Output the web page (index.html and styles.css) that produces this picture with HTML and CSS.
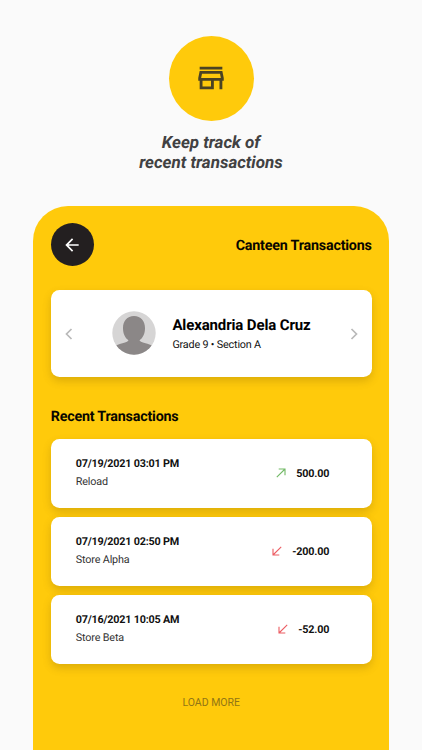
FILE: index.html
```html
<!DOCTYPE html>
<html lang="en">
<head>
<meta charset="utf-8">
<title>Canteen Transactions</title>
<link rel="stylesheet" href="styles.css">
</head>
<body>
<header class="intro">
  <div class="badge">
    <svg width="34" height="34" viewBox="0 0 24 24" fill="#4b4323"><path d="M18.36 9l.6 3H5.04l.6-3h12.72M20 4H4v2h16V4zm0 3H4l-1 5v2h1v6h10v-6h4v6h2v-6h1v-2l-1-5zM6 18v-4h6v4H6z"/></svg>
  </div>
  <h1 class="tagline"><span>Keep track of</span><br><span>recent transactions</span></h1>
</header>
<main class="panel">
  <div class="topbar">
    <button class="back" aria-label="Back">
      <svg width="20" height="20" viewBox="0 0 24 24" fill="#fff"><path d="M20 11H7.83l5.59-5.59L12 4l-8 8 8 8 1.41-1.41L7.83 13H20v-2z"/></svg>
    </button>
    <h2 class="title">Canteen Transactions</h2>
  </div>
  <section class="card student">
    <svg class="chevron" width="8" height="12" viewBox="0 0 8 12"><path d="M6.5 1 1.5 6l5 5"/></svg>
    <svg class="avatar" width="44" height="44" viewBox="0 0 44 44">
      <clipPath id="round"><circle cx="22" cy="22" r="21.7"/></clipPath>
      <g clip-path="url(#round)">
        <rect width="44" height="44" fill="#d6d5d5"/>
        <path fill="#8b8787" d="M22 5C29 5 33 10 33 17C33 22.500 31 27 27.500 29.200C28.500 31.500 34 31.800 39.500 34.300V44H4.500V34.300C10 31.800 15.500 31.500 16.500 29.200C13 27 11 22.500 11 17C11 10 15 5 22 5Z"/>
      </g>
    </svg>
    <div class="who">
      <div class="name">Alexandria Dela Cruz</div>
      <div class="grade">Grade 9 • Section A</div>
    </div>
    <svg class="chevron" width="8" height="12" viewBox="0 0 8 12"><path d="m1.500 1 5 5-5 5"/></svg>
  </section>
  <h3 class="heading">Recent Transactions</h3>
  <section class="list">
    <article class="card row">
      <div><div class="date">07/19/2021 03:01 PM</div><div class="place">Reload</div></div>
      <div class="amount"><svg class="in" width="10" height="10" viewBox="0 0 10 10"><path d="M.8 9.200 9 1M2.700 1H9v6.300"/></svg><span>500.00</span></div>
    </article>
    <article class="card row">
      <div><div class="date">07/19/2021 02:50 PM</div><div class="place">Store Alpha</div></div>
      <div class="amount"><svg class="out" width="10" height="10" viewBox="0 0 10 10"><path d="M9.200.8 1 9M1 2.700V9h6.300"/></svg><span>-200.00</span></div>
    </article>
    <article class="card row">
      <div><div class="date">07/16/2021 10:05 AM</div><div class="place">Store Beta</div></div>
      <div class="amount"><svg class="out" width="10" height="10" viewBox="0 0 10 10"><path d="M9.200.8 1 9M1 2.700V9h6.300"/></svg><span>-52.00</span></div>
    </article>
  </section>
  <button class="more">LOAD MORE</button>
</main>
</body>
</html>
```
FILE: styles.css
```css
* { box-sizing: border-box; margin: 0; padding: 0; }
body {
  width: 422px; height: 750px; overflow: hidden;
  display: flex; flex-direction: column;
  background: #fafafa; color: #111;
  font-family: Roboto, "Liberation Sans", sans-serif;
  text-rendering: geometricPrecision;
}
svg { display: block; flex: none; }
button { border: 0; font: inherit; }
.intro { height: 206px; flex: none; padding-top: 35.5px; display: flex; flex-direction: column; align-items: center; }
.badge { width: 85px; height: 85px; border-radius: 50%; background: #ffca0b; display: flex; align-items: center; justify-content: center; }
.tagline { margin-top: 12.800px; font-size: 17px; line-height: 20px; font-style: italic; font-weight: 700; text-align: center; color: #414142; white-space: nowrap; }
.panel { flex: 1; margin: 0 33.3px; padding: 17px 17px 0 17.400px; background: #ffca0b; border-radius: 35px 35px 0 0; display: flex; flex-direction: column; }
.topbar { height: 43px; flex: none; display: flex; align-items: center; justify-content: space-between; }
.back { width: 43.500px; height: 43.500px; border-radius: 50%; background: #231f20; display: flex; align-items: center; justify-content: center; }
.title { padding-top: 2px; font-size: 14.300px; letter-spacing: -.2px; line-height: 18px; font-weight: 700; color: #080600; }
.card { background: #fff; border-radius: 8.500px; box-shadow: 0 4px 8px rgba(110, 80, 0, .24); }
.student { height: 86.500px; flex: none; margin-top: 24px; padding: 0 14px 0 14.500px; display: flex; align-items: center; }
.chevron { fill: none; stroke: #b9b9b9; stroke-width: 1.700; position: relative; top: .5px; }
.avatar { margin-left: 38.700px; }
.who { flex: 1; margin-left: 16.500px; padding-top: 1.500px; white-space: nowrap; }
.name { font-size: 15px; letter-spacing: -.13px; line-height: 19px; font-weight: 700; color: #000; }
.grade { margin-top: 1px; font-size: 10.800px; letter-spacing: -.18px; line-height: 17px; }
.heading { margin-top: 30px; font-size: 14.300px; letter-spacing: -.2px; line-height: 20px; font-weight: 700; color: #080600; }
.list { margin-top: 12px; display: grid; gap: 8.500px; }
.row { height: 69.500px; padding: 0 42.500px 0 25px; display: flex; align-items: center; justify-content: space-between; }
.date { font-size: 10.800px; letter-spacing: -.2px; line-height: 16px; font-weight: 700; }
.place { margin-top: 2px; font-size: 10.800px; letter-spacing: -.15px; line-height: 16px; color: #333; }
.amount { display: flex; align-items: center; gap: 10.500px; font-size: 10.800px; letter-spacing: -.2px; font-weight: 700; }
.in, .out { fill: none; stroke-width: 1.100; }
.in { stroke: #72b966; }
.out { stroke: #ec5c62; }
.more { align-self: center; margin-top: 30.500px; background: none; font-size: 10.500px; line-height: 16px; color: #917515; }
```
